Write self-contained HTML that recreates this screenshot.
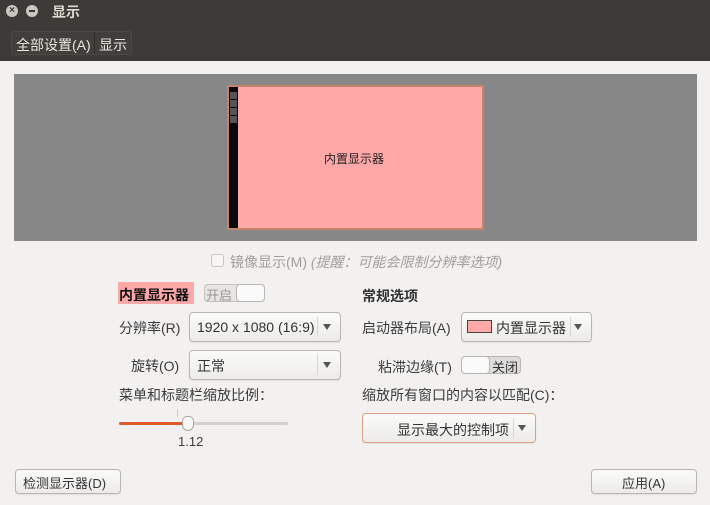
<!DOCTYPE html><html><head><meta charset="utf-8"><style>
*{box-sizing:border-box;margin:0;padding:0}
body{width:710px;height:505px;overflow:hidden;background:#f2f1f0;font-family:"Liberation Sans","Noto Sans CJK SC",sans-serif;font-size:13px;color:#3c3c3c;position:relative}
.a{position:absolute;white-space:nowrap}
.btn{position:absolute;border:1px solid #b8b6b2;border-radius:4px;background:linear-gradient(#fbfbfa,#ecebe9);box-shadow:0 1px 1px rgba(0,0,0,.08)}
.arr{position:absolute;width:0;height:0;border-left:4px solid transparent;border-right:4px solid transparent;border-top:6px solid #555}
.sep{position:absolute;width:1px;background:#d8d6d2}
</style></head><body>
<div class="a" style="left:0;top:0;width:710px;height:61px;background:#3c3b37"></div>
<div class="a" style="left:6px;top:5px;width:12px;height:12px;border-radius:50%;background:#c9c7c2;color:#3c3b37;font-size:10px;line-height:12px;text-align:center;font-weight:bold">×</div>
<div class="a" style="left:26px;top:5px;width:12px;height:12px;border-radius:50%;background:#c9c7c2"><div style="margin:5px 3px;height:2px;background:#3c3b37"></div></div>
<div class="a" style="left:52px;top:2px;color:#dfdbd2;font-weight:bold;font-size:14px">显示</div>
<div class="a" style="left:11px;top:31px;width:121px;height:24px;border:1px solid #4a4944;border-radius:3px;background:#403f3b"></div>
<div class="a" style="left:94px;top:32px;width:1px;height:22px;background:#2e2d2a"></div>
<div class="a" style="left:16px;top:35px;color:#e8e6e0;font-size:14px">全部设置(A)</div>
<div class="a" style="left:99px;top:35px;color:#e8e6e0;font-size:14px">显示</div>

<div class="a" style="left:14px;top:74px;width:683px;height:167px;background:#878787"></div>
<div class="a" style="left:227px;top:85px;width:257px;height:145px;background:#ffa8a8;border:2px solid #c8826a"></div>
<div class="a" style="left:229px;top:87px;width:9px;height:141px;background:#0a0a0a"></div>
<div class="a" style="left:230px;top:92px;width:7px;height:7px;background:#555"></div>
<div class="a" style="left:230px;top:100px;width:7px;height:7px;background:#555"></div>
<div class="a" style="left:230px;top:108px;width:7px;height:7px;background:#555"></div>
<div class="a" style="left:230px;top:116px;width:7px;height:7px;background:#555"></div>
<div class="a" style="left:324px;top:150px;color:#222;font-size:12px">内置显示器</div>

<div class="a" style="left:211px;top:254px;width:13px;height:13px;border:1px solid #c8c6c2;border-radius:3px;background:#f6f5f4"></div>
<div class="a" style="left:230px;top:252px;color:#a09e9a;font-size:14px">镜像显示(M) <i>(提醒：可能会限制分辨率选项)</i></div>

<div class="a" style="left:118px;top:282px;width:76px;height:22px;background:#ffa8a8"></div>
<div class="a" style="left:119px;top:285px;color:#111;font-weight:bold;font-size:14px">内置显示器</div>
<div class="a" style="left:204px;top:284px;width:61px;height:18px;border:1px solid #c4c2be;border-radius:4px;background:#e6e5e3"></div>
<div class="a" style="left:206px;top:285px;color:#9a9894;font-size:13px">开启</div>
<div class="a" style="left:236px;top:284px;width:29px;height:18px;border:1px solid #b8b6b2;border-radius:4px;background:#fafafa"></div>

<div class="a" style="left:119px;top:318px;font-size:14px">分辨率(R)</div>
<div class="btn" style="left:189px;top:312px;width:152px;height:30px"></div>
<div class="a" style="left:197px;top:319px;font-size:14px;color:#333">1920 x 1080 (16:9)</div>
<div class="sep" style="left:317px;top:317px;height:20px"></div>
<div class="arr" style="left:323px;top:324px"></div>

<div class="a" style="left:131px;top:356px;font-size:14px">旋转(O)</div>
<div class="btn" style="left:189px;top:350px;width:152px;height:30px"></div>
<div class="a" style="left:197px;top:356px;font-size:14px;color:#333">正常</div>
<div class="sep" style="left:317px;top:355px;height:20px"></div>
<div class="arr" style="left:323px;top:362px"></div>

<div class="a" style="left:119px;top:385px;font-size:14px">菜单和标题栏缩放比例：</div>
<div class="a" style="left:177px;top:409px;width:1px;height:8px;background:#d0ceca"></div>
<div class="a" style="left:119px;top:422px;width:169px;height:3px;border-radius:2px;background:#d3d1cd"></div>
<div class="a" style="left:119px;top:422px;width:68px;height:3px;border-radius:2px;background:#df5a2a"></div>
<div class="a" style="left:182px;top:416px;width:12px;height:15px;border:1px solid #a8a6a2;border-radius:5px 5px 6px 6px;background:#f8f8f7"></div>
<div class="a" style="left:178px;top:434px;font-size:13px">1.12</div>

<div class="a" style="left:362px;top:286px;color:#333;font-weight:bold;font-size:14px">常规选项</div>
<div class="a" style="left:362px;top:318px;font-size:14px">启动器布局(A)</div>
<div class="btn" style="left:461px;top:312px;width:131px;height:30px"></div>
<div class="a" style="left:467px;top:320px;width:25px;height:13px;background:#ffa8a8;border:1px solid #444"></div>
<div class="a" style="left:496px;top:318px;font-size:14px;color:#333">内置显示器</div>
<div class="sep" style="left:570px;top:317px;height:20px"></div>
<div class="arr" style="left:574px;top:324px"></div>

<div class="a" style="left:378px;top:357px;font-size:14px">粘滞边缘(T)</div>
<div class="a" style="left:461px;top:356px;width:60px;height:18px;border:1px solid #b8b6b2;border-radius:4px;background:#dddcda"></div>
<div class="a" style="left:461px;top:356px;width:29px;height:18px;border:1px solid #b8b6b2;border-radius:4px;background:#fafafa"></div>
<div class="a" style="left:492px;top:357px;font-size:13px;color:#333">关闭</div>

<div class="a" style="left:362px;top:385px;font-size:14px">缩放所有窗口的内容以匹配(C)：</div>
<div class="btn" style="left:362px;top:413px;width:174px;height:30px;border-color:#e0a088"></div>
<div class="a" style="left:397px;top:420px;font-size:14px;color:#333">显示最大的控制项</div>
<div class="sep" style="left:513px;top:418px;height:20px"></div>
<div class="arr" style="left:518px;top:425px"></div>

<div class="btn" style="left:15px;top:469px;width:106px;height:25px"></div>
<div class="a" style="left:23px;top:473px;font-size:13px;color:#333">检测显示器(D)</div>
<div class="btn" style="left:591px;top:469px;width:106px;height:25px"></div>
<div class="a" style="left:622px;top:473px;font-size:13px;color:#333">应用(A)</div>
</body></html>
